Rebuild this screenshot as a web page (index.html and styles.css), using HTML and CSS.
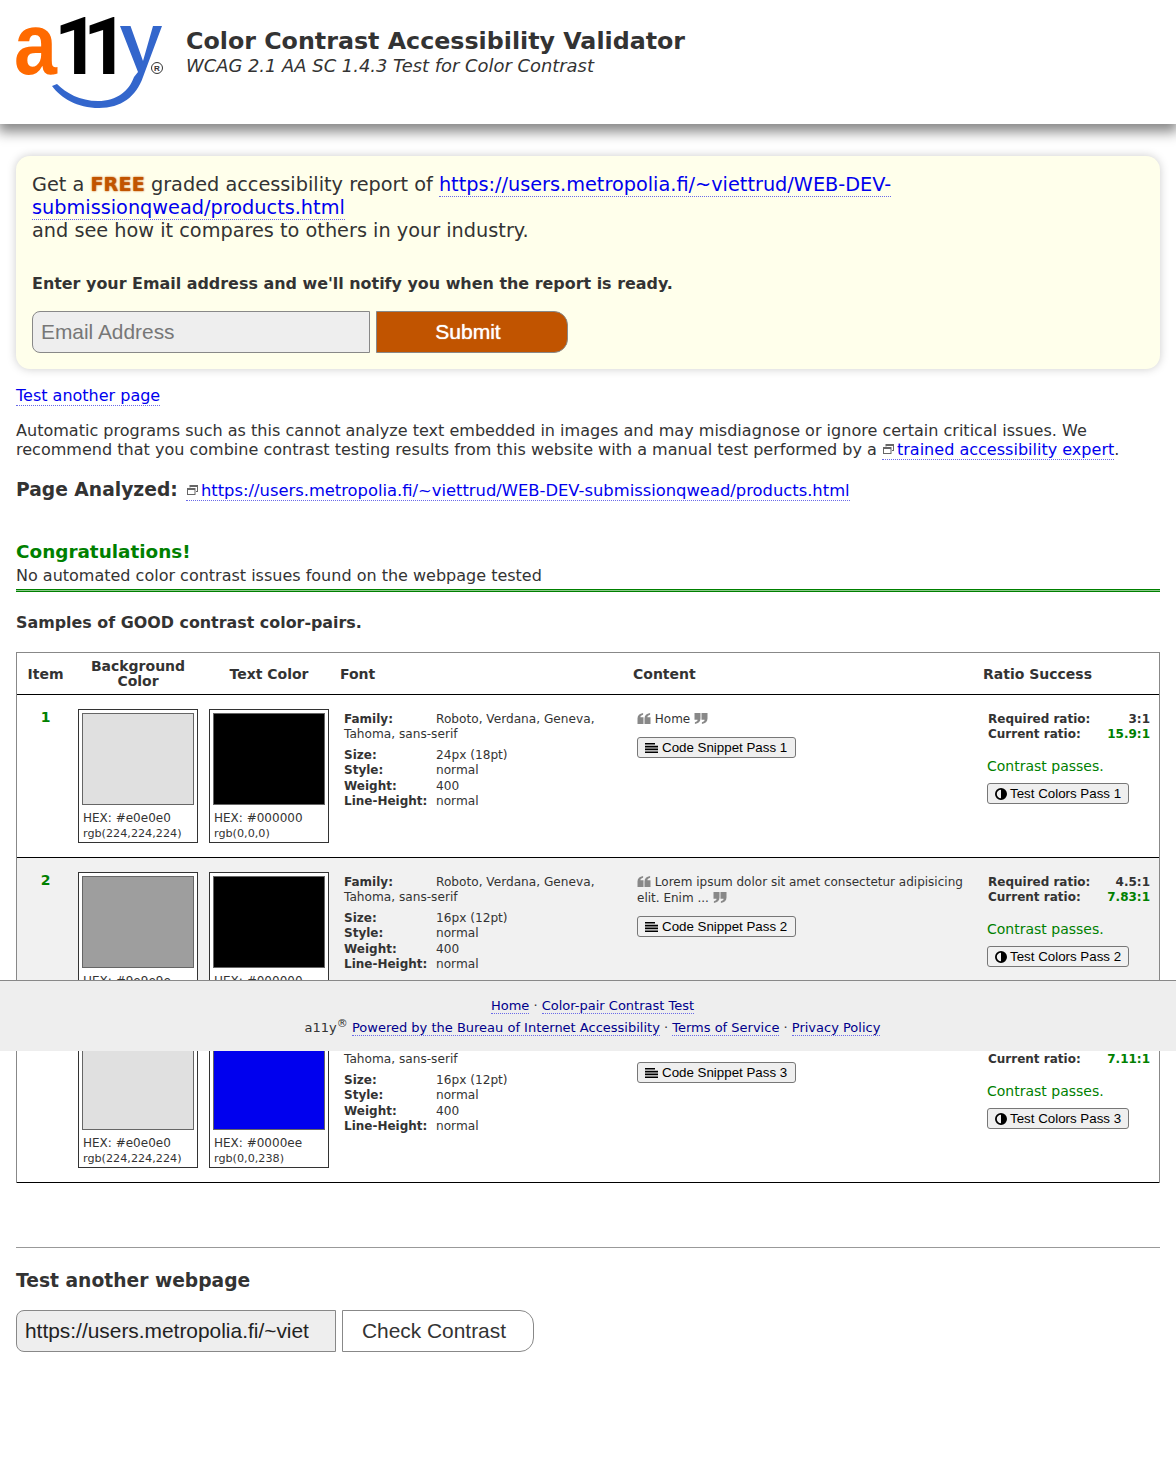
FILE: index.html
```html
<!DOCTYPE html>
<html lang="en">
<head>
<meta charset="UTF-8">
<title>Color Contrast Accessibility Validator</title>
<link rel="stylesheet" href="styles.css">
</head>
<body>

<svg class="sprites" width="0" height="0" aria-hidden="true">
    <symbol id="i-open" viewBox="0 0 13 11"><path d="M0 5.500C0 2.500 2 .6 5.600 0v1.800C3.800 2.200 3 3 2.900 4.300H6V11H0zM7 5.500C7 2.500 9 .6 12.600 0v1.800c-1.800.4-2.600 1.200-2.700 2.500H13V11H7z"/></symbol>
    <symbol id="i-close" viewBox="0 0 13 11"><path d="M6 5.500C6 8.500 4 10.400.4 11V9.200C2.200 8.800 3 8 3.100 6.700H0V0h6zM13 5.500c0 3-2 4.900-5.600 5.500V9.200c1.800-.4 2.600-1.200 2.700-2.500H7V0h6z"/></symbol>
    <symbol id="i-lines" viewBox="0 0 13 10"><path d="M0 0h10v1.600H0zM0 2.800h13v1.600H0zM0 5.600h13v1.600H0zM0 8.400h13V10H0z"/></symbol>
    <symbol id="i-adjust" viewBox="0 0 12 12"><path fill-rule="evenodd" d="M6 0a6 6 0 1 0 0 12A6 6 0 0 0 6 0zM6 1.800v8.400a4.200 4.200 0 0 1 0-8.400z"/></symbol>
    <symbol id="i-window" viewBox="0 0 11 10"><path d="M2.500 0H11v7H9V6h1V2H3.500v.5h-1zM0 3h8.500v7H0zm1 2v4h6.500V5z"/></symbol>
</svg>

<header class="site-header">
    <svg class="logo" viewBox="0 0 165 112" width="165" height="112" role="img" aria-label="a11y">
        <text x="14" y="74" class="logo-a" textLength="43" lengthAdjust="spacingAndGlyphs">a</text>
        <text x="54" y="74" class="logo-one">1</text>
        <text x="83" y="74" class="logo-one">1</text>
        <path class="logo-y" d="M120 26h10.500L143 61l10-35h9l-19 51c-7 20-22 31-44 31-22 0-38-10-47-22l5-2c9 9 23 17 41 17 19 0 31-10 36-24l4-5z"/>
        <circle cx="157" cy="68" r="5.500" class="logo-reg"/>
        <text x="157" y="71" class="logo-r">R</text>
    </svg>
    <div class="titles">
        <h1>Color Contrast Accessibility Validator</h1>
        <p>WCAG 2.1 AA SC 1.4.3 Test for Color Contrast</p>
    </div>
</header>

<main class="container">

    <section class="report-box">
        <p class="report-text">Get a <b class="free">FREE</b> graded accessibility report of <a href="#">https://users.metropolia.fi/~viettrud/WEB-DEV-submissionqwead/products.html</a><br>and see how it compares to others in your industry.</p>
        <p class="report-notify">Enter your Email address and we'll notify you when the report is ready.</p>
        <form class="report-form">
            <input class="email-input" type="text" placeholder="Email Address">
            <button class="submit-btn" type="button">Submit</button>
        </form>
    </section>

    <p class="another"><a href="#">Test another page</a></p>

    <p class="notice">Automatic programs such as this cannot analyze text embedded in images and may misdiagnose or ignore certain critical issues. We recommend that you combine contrast testing results from this website with a manual test performed by a <a href="#"><svg class="i-win"><use href="#i-window"/></svg>trained accessibility expert</a>.</p>

    <p class="analyzed"><b>Page Analyzed:</b> <a href="#"><svg class="i-win"><use href="#i-window"/></svg>https://users.metropolia.fi/~viettrud/WEB-DEV-submissionqwead/products.html</a></p>

    <div class="congrats">
        <h2>Congratulations!</h2>
        <p>No automated color contrast issues found on the webpage tested</p>
    </div>

    <h3 class="samples">Samples of GOOD contrast color-pairs.</h3>

    <table class="results">
        <colgroup>
            <col class="c-item"><col class="c-bg"><col class="c-text"><col class="c-font"><col class="c-content"><col class="c-ratio">
        </colgroup>
        <thead>
            <tr>
                <th class="center">Item</th>
                <th class="center">Background Color</th>
                <th class="center">Text Color</th>
                <th>Font</th>
                <th>Content</th>
                <th>Ratio Success</th>
            </tr>
        </thead>
        <tbody>
            <tr>
                <td class="num">1</td>
                <td><div class="card"><div class="swatch sw-e0"></div><div class="hex">HEX: #e0e0e0</div><div class="rgb">rgb(224,224,224)</div></div></td>
                <td><div class="card"><div class="swatch sw-00"></div><div class="hex">HEX: #000000</div><div class="rgb">rgb(0,0,0)</div></div></td>
                <td class="font-cell">
                    <p class="family"><b>Family:</b>Roboto, Verdana, Geneva, Tahoma, sans-serif</p>
                    <div class="props"><b>Size:</b><span>24px (18pt)</span><b>Style:</b><span>normal</span><b>Weight:</b><span>400</span><b>Line-Height:</b><span>normal</span></div>
                </td>
                <td class="content-cell">
                    <p class="quote"><svg class="i-quote"><use href="#i-open"/></svg> Home <svg class="i-quote"><use href="#i-close"/></svg></p>
                    <button class="small-btn" type="button"><svg class="i-lines"><use href="#i-lines"/></svg>Code Snippet Pass 1</button>
                </td>
                <td class="ratio-cell">
                    <div class="ratio-row"><b>Required ratio:</b><b>3:1</b></div>
                    <div class="ratio-row"><b>Current ratio:</b><b class="good">15.9:1</b></div>
                    <p class="passes">Contrast passes.</p>
                    <button class="small-btn" type="button"><svg class="i-adjust"><use href="#i-adjust"/></svg>Test Colors Pass 1</button>
                </td>
            </tr>
            <tr class="alt">
                <td class="num">2</td>
                <td><div class="card"><div class="swatch sw-9e"></div><div class="hex">HEX: #9e9e9e</div><div class="rgb">rgb(158,158,158)</div></div></td>
                <td><div class="card"><div class="swatch sw-00"></div><div class="hex">HEX: #000000</div><div class="rgb">rgb(0,0,0)</div></div></td>
                <td class="font-cell">
                    <p class="family"><b>Family:</b>Roboto, Verdana, Geneva, Tahoma, sans-serif</p>
                    <div class="props"><b>Size:</b><span>16px (12pt)</span><b>Style:</b><span>normal</span><b>Weight:</b><span>400</span><b>Line-Height:</b><span>normal</span></div>
                </td>
                <td class="content-cell">
                    <p class="quote"><svg class="i-quote"><use href="#i-open"/></svg> Lorem ipsum dolor sit amet consectetur adipisicing elit. Enim ... <svg class="i-quote"><use href="#i-close"/></svg></p>
                    <button class="small-btn" type="button"><svg class="i-lines"><use href="#i-lines"/></svg>Code Snippet Pass 2</button>
                </td>
                <td class="ratio-cell">
                    <div class="ratio-row"><b>Required ratio:</b><b>4.5:1</b></div>
                    <div class="ratio-row"><b>Current ratio:</b><b class="good">7.83:1</b></div>
                    <p class="passes">Contrast passes.</p>
                    <button class="small-btn" type="button"><svg class="i-adjust"><use href="#i-adjust"/></svg>Test Colors Pass 2</button>
                </td>
            </tr>
            <tr>
                <td class="num">3</td>
                <td><div class="card"><div class="swatch sw-e0"></div><div class="hex">HEX: #e0e0e0</div><div class="rgb">rgb(224,224,224)</div></div></td>
                <td><div class="card"><div class="swatch sw-ee"></div><div class="hex">HEX: #0000ee</div><div class="rgb">rgb(0,0,238)</div></div></td>
                <td class="font-cell">
                    <p class="family"><b>Family:</b>Roboto, Verdana, Geneva, Tahoma, sans-serif</p>
                    <div class="props"><b>Size:</b><span>16px (12pt)</span><b>Style:</b><span>normal</span><b>Weight:</b><span>400</span><b>Line-Height:</b><span>normal</span></div>
                </td>
                <td class="content-cell">
                    <p class="quote"><svg class="i-quote"><use href="#i-open"/></svg> Home <svg class="i-quote"><use href="#i-close"/></svg></p>
                    <button class="small-btn" type="button"><svg class="i-lines"><use href="#i-lines"/></svg>Code Snippet Pass 3</button>
                </td>
                <td class="ratio-cell">
                    <div class="ratio-row"><b>Required ratio:</b><b>4.5:1</b></div>
                    <div class="ratio-row"><b>Current ratio:</b><b class="good">7.11:1</b></div>
                    <p class="passes">Contrast passes.</p>
                    <button class="small-btn" type="button"><svg class="i-adjust"><use href="#i-adjust"/></svg>Test Colors Pass 3</button>
                </td>
            </tr>
        </tbody>
    </table>

    <hr class="divider">

    <h2 class="retest-title">Test another webpage</h2>
    <form class="retest-form">
        <input class="url-input" type="text" value="https://users.metropolia.fi/~viettrud/WEB-DEV-submissionqwead/products.html">
        <button class="check-btn" type="button">Check Contrast</button>
    </form>

</main>

<footer class="site-footer">
    <p><a href="#">Home</a> · <a href="#">Color-pair Contrast Test</a></p>
    <p>a11y<sup>®</sup> <a href="#">Powered by the Bureau of Internet Accessibility</a> · <a href="#">Terms of Service</a> · <a href="#">Privacy Policy</a></p>
</footer>

</body>
</html>
```

FILE: styles.css
```css
body {
    margin: 0;
    height: 1476px;
    font-family: "DejaVu Sans", Verdana, sans-serif;
    font-size: 16.05px;
    color: #333;
    background-color: #fff;
    position: relative;
    overflow: hidden;
}

p, h1, h2, h3 {
    margin: 0;
}

a {
    color: #00e;
    text-decoration: none;
    border-bottom: 1px dotted #6a6ae8;
}

.sprites {
    position: absolute;
}

/* header */
.site-header {
    height: 124px;
    display: flex;
    align-items: flex-start;
    box-shadow: 0 6px 12px 2px #888;
}

.logo {
    flex: none;
    overflow: visible;
}

.logo-a {
    font: 700 88px "Liberation Sans", sans-serif;
    fill: #ff6a00;
}

.logo-one {
    font: 700 80px Roboto, sans-serif;
    fill: #000;
}

.logo-y {
    fill: #3366cc;
}

.logo-reg {
    fill: none;
    stroke: #333;
    stroke-width: 1;
}

.logo-r {
    font: 700 8px "Liberation Sans", sans-serif;
    fill: #333;
    text-anchor: middle;
}

.titles {
    margin: 27px 0 0 21px;
}

.titles h1 {
    font-size: 23.75px;
    line-height: 29px;
}

.titles p {
    font-size: 17.9px;
    font-style: italic;
    line-height: 19px;
}

.container {
    padding: 32px 16px 0;
}

/* report box */
.report-box {
    height: 213px;
    box-sizing: border-box;
    padding: 17px 16px 0;
    background-color: #ffffeb;
    border-radius: 14px;
    box-shadow: 0 0 10px #ccc;
}

.report-text {
    font-size: 19.3px;
    line-height: 23px;
}

.free {
    color: #c15400;
    text-shadow: 0 0 2px #c15400;
}

.report-notify {
    margin-top: 32px;
    font-size: 15.93px;
    font-weight: bold;
    line-height: 20px;
}

.report-form {
    display: flex;
    gap: 6px;
    margin-top: 17px;
}

.email-input {
    width: 338px;
    height: 42px;
    box-sizing: border-box;
    padding: 0 8px;
    font: 20.9px "Liberation Sans", sans-serif;
    background-color: #eee;
    border: 1px solid #888;
    border-radius: 8px 0 0 8px;
}

.email-input::placeholder {
    color: #777;
}

.submit-btn {
    width: 192px;
    height: 42px;
    padding: 0 8px 0 0;
    font: 21px "Liberation Sans", sans-serif;
    color: #fff;
    text-shadow: 0 0 1px #fff;
    background-color: #c15400;
    border: 1px solid #888;
    border-radius: 0 14px 14px 0;
}

.another {
    margin-top: 18px;
    line-height: 18px;
    font-size: 16px;
}

.notice {
    margin-top: 16px;
    line-height: 19px;
}

.i-win {
    width: 11px;
    height: 10px;
    margin: 0 3px 3px 1px;
    fill: #666;
    vertical-align: middle;
}

.analyzed {
    margin-top: 19px;
    line-height: 24px;
    font-size: 16.35px;
}

.analyzed b {
    font-size: 18.7px;
    margin-right: 3px;
}

.congrats {
    margin-top: 37px;
    padding-bottom: 1px;
    border-bottom: 1px solid #008000;
    box-shadow: 0 1px 0 #8cc88c, 0 2px 0 #008000;
}

.congrats h2 {
    color: #008000;
    font-size: 18.4px;
    line-height: 24px;
}

.congrats p {
    font-size: 16px;
    line-height: 24px;
}

.samples {
    margin-top: 23px;
    font-size: 15.9px;
    line-height: 20px;
}

/* results table */
.results {
    width: 1144px;
    margin-top: 19px;
    table-layout: fixed;
    border-collapse: separate;
    border-spacing: 0;
    border: 1px solid #888;
    border-bottom: 0;
}

.c-item { width: 57px; }
.c-bg { width: 128px; }
.c-text { width: 134px; }
.c-font { width: 293px; }
.c-content { width: 350px; }
.c-ratio { width: 180px; }

.results th {
    height: 40px;
    padding: 1px 4px 0;
    font-size: 14px;
    line-height: 15px;
    text-align: left;
    border-bottom: 1px solid #000;
}

.results th.center {
    text-align: center;
}

.results td {
    padding: 14px 4px;
    vertical-align: top;
    font-size: 12px;
    line-height: 15px;
    border-bottom: 1px solid #000;
}

.results tr:last-child td {
    padding-top: 13px;
}

.alt td {
    background-color: #f1f1f1;
}

.results .num {
    padding-top: 15px;
    text-align: center;
    font-size: 14px;
    font-weight: bold;
    color: #008000;
}

.card {
    width: 118px;
    height: 132px;
    margin: 0 auto;
    padding: 0;
    background-color: #fff;
    border: 1px solid #333;
    font-size: 12px;
    line-height: 16px;
}

.swatch {
    width: 110px;
    height: 90px;
    margin: 3px 3px 5px;
    border: 1px solid #666;
}

.sw-e0 { background-color: #e0e0e0; }
.sw-00 { background-color: #000; }
.sw-9e { background-color: #9e9e9e; }
.sw-ee { background-color: #00e; }

.hex, .rgb {
    padding-left: 4px;
}

.rgb {
    font-size: 11.2px;
}

.font-cell, .content-cell, .ratio-cell {
    padding-left: 8px !important;
    padding-right: 10px !important;
}

.font-cell {
    font-size: 12.15px !important;
}

.font-cell b {
    font-size: 12px;
}

.family {
    margin-top: 3px;
}

.family b {
    display: inline-block;
    width: 92px;
}

.props {
    display: grid;
    grid-template-columns: 92px 1fr;
    grid-auto-rows: 15.3px;
    margin-top: 6px;
}

.quote {
    margin-top: 2px;
    line-height: 16px;
}

.i-quote {
    width: 14px;
    height: 11px;
    fill: #888;
    vertical-align: -1px;
}

.small-btn {
    display: flex;
    align-items: center;
    height: 21px;
    padding: 0 7px;
    font: 13.33px "Liberation Sans", sans-serif;
    color: #000;
    background-color: #efefef;
    border: 1px solid #777;
    border-radius: 3px;
}

.content-cell .small-btn {
    margin-top: 10px;
    padding-right: 8px;
}

.alt .small-btn {
    background-color: #f1f1f1;
}

.i-lines {
    width: 13px;
    height: 10px;
    margin-right: 4px;
}

.i-adjust {
    width: 12px;
    height: 12px;
    margin-right: 3px;
}

.ratio-row {
    display: flex;
    justify-content: space-between;
    padding-left: 1px;
}

.ratio-row:first-child {
    margin-top: 3px;
}

.ratio-cell {
    padding-right: 9px !important;
}

.good {
    color: #008000;
}

.passes {
    margin-top: 16px;
    font-size: 14px;
    line-height: 17px;
    color: #008000;
}

.ratio-cell .small-btn {
    margin-top: 8px;
}

.divider {
    margin: 64px 0 0;
    border: 0;
    border-top: 1px solid #999;
}

.retest-title {
    margin-top: 21px;
    font-size: 18.7px;
    line-height: 24px;
}

.retest-form {
    display: flex;
    gap: 6px;
    margin-top: 17px;
}

.url-input {
    width: 320px;
    height: 42px;
    box-sizing: border-box;
    padding: 0 26px 0 8px;
    font: 20.9px "Liberation Sans", sans-serif;
    color: #222;
    background-color: #eee;
    border: 1px solid #888;
    border-radius: 8px 0 0 8px;
}

.check-btn {
    width: 192px;
    height: 42px;
    padding: 0 8px 0 0;
    font: 20.9px "Liberation Sans", sans-serif;
    color: #333;
    background-color: #fff;
    border: 1px solid #888;
    border-radius: 0 14px 14px 0;
}

/* footer sits over the table */
.site-footer {
    position: absolute;
    top: 980px;
    left: 0;
    right: 0;
    height: 71px;
    box-sizing: border-box;
    padding: 14px 0 0 9px;
    background-color: #eee;
    border-top: 1px solid #888;
    text-align: center;
    font-size: 13px;
    line-height: 22px;
}

.site-footer a {
    color: #00008b;
}

.site-footer sup {
    font-size: 11px;
    line-height: 0;
}
```
